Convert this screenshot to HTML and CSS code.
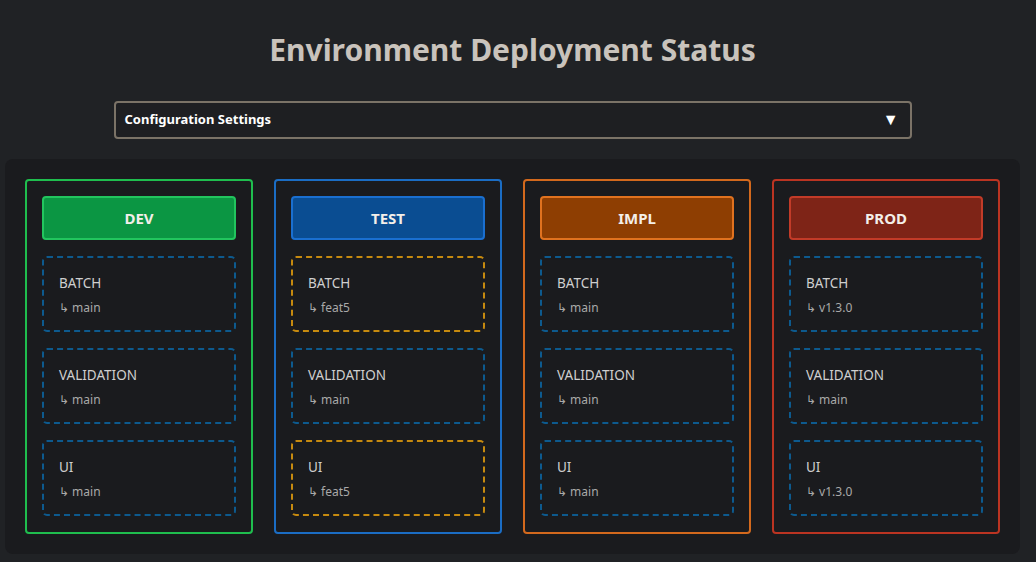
FILE: index.html
```html
<!DOCTYPE html>
<html>
<head>
<meta charset="utf-8">
<link rel="stylesheet" href="styles.css">
</head>
<body>
<div class="page">
  <h1 class="title">Environment Deployment Status</h1>
  <div class="dropdown">
    <span class="dropdown-label">Configuration Settings</span>
    <span class="dropdown-arrow">▼</span>
  </div>
  <div class="board">
    <div class="env env-dev">
      <div class="env-head">DEV</div>
      <div class="card"><div class="card-name">BATCH</div><div class="card-branch">↳ main</div></div>
      <div class="card"><div class="card-name">VALIDATION</div><div class="card-branch">↳ main</div></div>
      <div class="card"><div class="card-name">UI</div><div class="card-branch">↳ main</div></div>
    </div>
    <div class="env env-test">
      <div class="env-head">TEST</div>
      <div class="card card-diff"><div class="card-name">BATCH</div><div class="card-branch">↳ feat5</div></div>
      <div class="card"><div class="card-name">VALIDATION</div><div class="card-branch">↳ main</div></div>
      <div class="card card-diff"><div class="card-name">UI</div><div class="card-branch">↳ feat5</div></div>
    </div>
    <div class="env env-impl">
      <div class="env-head">IMPL</div>
      <div class="card"><div class="card-name">BATCH</div><div class="card-branch">↳ main</div></div>
      <div class="card"><div class="card-name">VALIDATION</div><div class="card-branch">↳ main</div></div>
      <div class="card"><div class="card-name">UI</div><div class="card-branch">↳ main</div></div>
    </div>
    <div class="env env-prod">
      <div class="env-head">PROD</div>
      <div class="card"><div class="card-name">BATCH</div><div class="card-branch">↳ v1.3.0</div></div>
      <div class="card"><div class="card-name">VALIDATION</div><div class="card-branch">↳ main</div></div>
      <div class="card"><div class="card-name">UI</div><div class="card-branch">↳ v1.3.0</div></div>
    </div>
  </div>
</div>
</body>
</html>
```

FILE: styles.css
```css
* { box-sizing: border-box; }
html, body { margin: 0; padding: 0; }
body {
  background: #202225;
  font-family: "Noto Sans", "Open Sans", sans-serif;
  color: #d0d0d0;
}
.page {
  width: 1015px;
  margin-left: 5px;
  padding-top: 30px;
}
.title {
  margin: 0;
  text-align: center;
  font-size: 30px;
  line-height: 40px;
  font-weight: 700;
  color: #c9c3bc;
}
.dropdown {
  width: 798px;
  height: 38px;
  margin: 31px auto 0;
  border: 2px solid #7b7367;
  border-radius: 4px;
  background: #1e1f22;
  display: flex;
  align-items: center;
  justify-content: space-between;
  padding: 0 11px 2px 9px;
  color: #ffffff;
}
.dropdown-label {
  font-size: 13px;
  font-weight: 700;
}
.dropdown-arrow {
  font-size: 16px;
}
.board {
  margin-top: 20px;
  background: #1a1b1e;
  border-radius: 8px;
  padding: 20px;
  height: 395px;
  display: grid;
  grid-template-columns: repeat(4, 228px);
  column-gap: 21px;
}
.env {
  border: 2px solid;
  border-radius: 4px;
  padding: 15px;
  display: flex;
  flex-direction: column;
  gap: 16px;
  height: 355px;
}
.env-head {
  height: 44px;
  border: 2px solid;
  border-radius: 4px;
  display: flex;
  align-items: center;
  justify-content: center;
  font-size: 15px;
  font-weight: 700;
  color: #f3efe9;
}
.env-dev { border-color: #1fbe4e; }
.env-dev .env-head { background: #0b9643; border-color: #22c55e; }
.env-test { border-color: #1b6dc4; }
.env-test .env-head { background: #0a4d92; border-color: #1a6fd0; }
.env-impl { border-color: #d3691d; }
.env-impl .env-head { background: #8e3e02; border-color: #e0721f; }
.env-prod { border-color: #bb3422; }
.env-prod .env-head { background: #7e2417; border-color: #c23b28; }
.card {
  height: 76px;
  border: 2px dashed #0d5a8e;
  border-radius: 5px;
  padding: 14px 15px 0;
}
.card-diff { border-color: #c68a0f; }
.card-name {
  font-size: 13.5px;
  line-height: 22px;
  color: #cfcfcf;
}
.card-branch {
  margin-top: 5px;
  font-size: 12px;
  line-height: 18px;
  color: #a9a9a9;
}
```
